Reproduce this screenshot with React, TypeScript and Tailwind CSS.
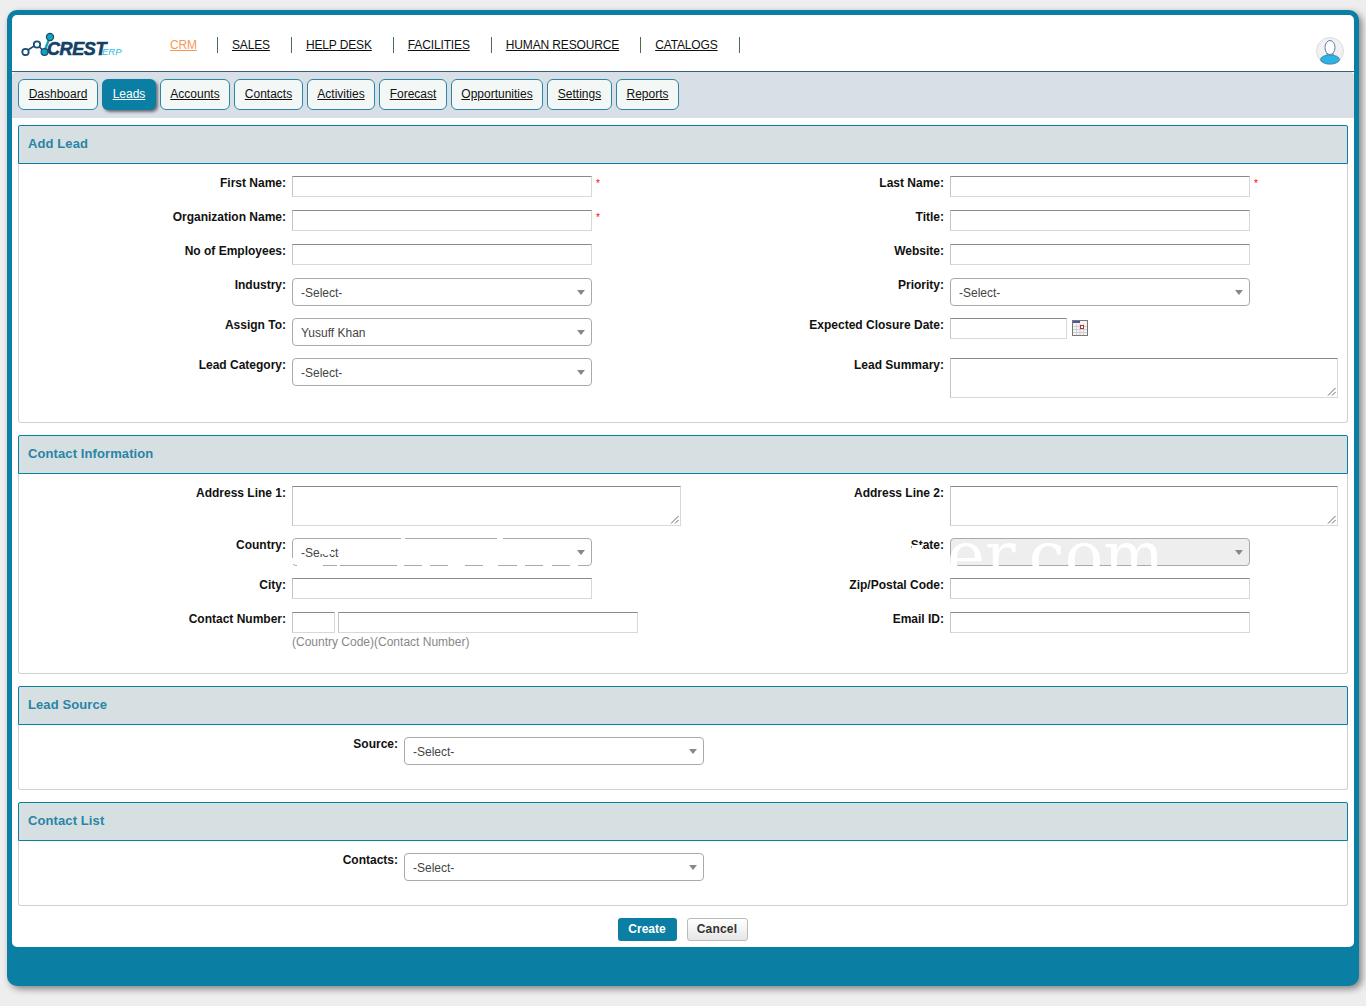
import type { ReactNode } from "react";

const F = { fontFamily: '"Liberation Sans", Arial, sans-serif' };

function Label({ text, w = "w-[273px]" }: { text: string; w?: string }) {
  return <label className={`${w} shrink-0 text-right text-[12px] leading-[14px] font-bold text-[#111] pr-[6px]`}>{text}</label>;
}
function Input({ w = "w-[300px]", req }: { w?: string; req?: boolean }) {
  return (
    <div className="flex items-start">
      <div className={`${w} h-[21px] bg-white border border-[#d8d8d8] border-t-[#8a8a8a] border-l-[#c4c4c4]`} />
      {req && <span className="text-[#f00] text-[10px] leading-[12px] ml-[4px] mt-[2px]">*</span>}
    </div>
  );
}
function Select({ value = "-Select-", disabled }: { value?: string; disabled?: boolean }) {
  return (
    <div className={`w-[300px] h-[28px] rounded-[4px] border border-[#aaa] flex items-center justify-between pl-[8px] pr-[6px] pt-[1px] ${disabled ? "bg-[#eee]" : "bg-white"}`}>
      <span className="text-[12px] text-[#444]">{value === "" ? "\u00a0" : value}</span>
      <span className="w-0 h-0 border-x-[4px] border-x-transparent border-t-[5px] border-t-[#888]" />
    </div>
  );
}
function Area({ w = "w-[388px]" }: { w?: string }) {
  return (
    <div className={`${w} shrink-0 h-[40px] bg-white border border-[#d8d8d8] border-t-[#8a8a8a] border-l-[#c4c4c4] relative`}>
      <svg className="absolute right-[1px] bottom-[1px]" width="9" height="9" viewBox="0 0 9 9">
        <path d="M8.5 1 L1 8.5 M8.5 5 L5 8.5" stroke="#666" strokeWidth="1" fill="none" />
      </svg>
    </div>
  );
}
function Row({ h, left, right }: { h: string; left: ReactNode; right?: ReactNode }) {
  return (
    <div className={`flex ${h}`}>
      <div className="w-[658px] flex items-start shrink-0">{left}</div>
      <div className="flex items-start">{right}</div>
    </div>
  );
}
function Section({ title, bodyH, children }: { title: string; bodyH: string; children: ReactNode }) {
  return (
    <section className="mb-[12px]">
      <div className="h-[39px] bg-[#d6e0e3] border border-[#0b7ea3] rounded-t-[2px] flex items-center pl-[9px] pb-[1px]">
        <h2 className="text-[13px] font-bold text-[#2a84a4] tracking-[0.1px]">{title}</h2>
      </div>
      <div className={`${bodyH} border border-t-0 border-[#d0d0d0] rounded-b-[3px] pt-[12px] bg-white`}>{children}</div>
    </section>
  );
}
const tabs = [
  { t: "Dashboard", w: "w-[80px]" },
  { t: "Leads", w: "w-[54px]" },
  { t: "Accounts", w: "w-[70px]" },
  { t: "Contacts", w: "w-[69px]" },
  { t: "Activities", w: "w-[68px]" },
  { t: "Forecast", w: "w-[68px]" },
  { t: "Opportunities", w: "w-[92px]" },
  { t: "Settings", w: "w-[65px]" },
  { t: "Reports", w: "w-[63px]" },
];
const nav = ["SALES", "HELP DESK", "FACILITIES", "HUMAN RESOURCE", "CATALOGS"];

function Logo() {
  return (
    <div className="relative w-[104px] h-[30px]">
      <svg className="absolute left-0 top-0" width="40" height="28" viewBox="0 0 40 28" fill="none">
        <path d="M4 20 L16 12 L23 20" stroke="#1b4f72" strokeWidth="1.6" />
        <path d="M23 20 L29 5" stroke="#12a3bd" strokeWidth="2.4" />
        <circle cx="4.5" cy="20" r="3.2" stroke="#1b4f72" strokeWidth="1.8" fill="white" />
        <circle cx="16" cy="12.5" r="3.2" stroke="#1b4f72" strokeWidth="1.8" fill="white" />
        <circle cx="23.5" cy="20" r="3.4" fill="#12a3bd" stroke="#1b4f72" strokeWidth="1.2" />
        <circle cx="29" cy="5" r="3.6" fill="#12a3bd" stroke="#1b4f72" strokeWidth="1.2" />
      </svg>
      <span className="absolute left-[26px] top-[7px] text-[18px] leading-[20px] font-bold italic text-[#143f66] tracking-[-0.4px] [-webkit-text-stroke:0.6px_#143f66]">CREST</span>
      <span className="absolute left-[81px] top-[14px] text-[9.5px] leading-[12px] italic text-[#25bcd8]">ERP</span>
    </div>
  );
}
function Avatar() {
  return (
    <svg width="30" height="30" viewBox="0 0 30 30" fill="none">
      <circle cx="15" cy="15" r="13.5" fill="#f1f1f1" stroke="#dcdcdc" strokeWidth="1" />
      <ellipse cx="15" cy="11.5" rx="5" ry="7" fill="white" stroke="#5b7fb0" strokeWidth="1" />
      <path d="M12 17 L12 20 M18 17 L18 20" stroke="#5b7fb0" />
      <ellipse cx="15" cy="23.5" rx="9.5" ry="4.6" fill="#2bb3e3" stroke="#3b6f9c" strokeWidth="0.7" />
    </svg>
  );
}
function Calendar() {
  return (
    <svg width="16" height="16" viewBox="0 0 16 16" className="ml-[5px] mt-[2px]">
      <rect x="0.5" y="0.5" width="15" height="15" fill="#f4f4f4" stroke="#777" />
      <rect x="1" y="1" width="7" height="2" fill="#4a55a8" />
      <path d="M1 6.5H15M1 9.5H15M1 12.5H15M4.5 4V15M8 4V15M11.5 4V15" stroke="#cfcfcf" strokeWidth="1" />
      <rect x="8.5" y="5.5" width="3" height="3" fill="#fff" stroke="#a33" />
    </svg>
  );
}
function WatermarkGaps() {
  const rects = [
    [121, 7, 4, 3], [217, 7, 6, 3],
    [17, 34, 26, 3], [57, 34, 3, 3], [117, 34, 7, 3], [142, 34, 8, 3], [168, 34, 17, 3],
    [203, 34, 15, 3], [237, 34, 8, 3], [263, 34, 9, 3], [290, 34, 8, 3],
    [11, 28, 3, 6], [40, 15, 11, 9], [59, 13, 7, 12],
    [632, 15, 10, 9],
  ];
  return (
    <svg className="absolute left-[280px] top-[530px]" width="680" height="40" viewBox="0 0 680 40">
      {rects.map(([x, y, w, h], i) => <rect key={i} x={x} y={y} width={w} height={h} fill="#fff" />)}
    </svg>
  );
}

export default function App() {
  return (
    <div className="w-[1366px] h-[1006px] bg-[#eeeeee] relative overflow-hidden pt-[10px] pl-[7px]" style={F}>
      <div className="w-[1352px] h-[976px] bg-[#0b7ea3] rounded-[10px] p-[5px] shadow-[3px_3px_7px_rgba(0,0,0,0.45)]">
        <div className="w-[1342px] h-[932px] bg-white rounded-[5px] overflow-hidden flex flex-col">
          <header className="h-[57px] shrink-0 border-b border-[#3d5f75] flex items-start">
            <div className="ml-[9px] mt-[17px] w-[149px] shrink-0"><Logo /></div>
            <nav className="flex items-center mt-[22px] text-[12px] leading-[16px] tracking-[-0.14px]">
              <a className="underline text-[#f59a55] pr-[20px]">CRM</a>
              {nav.map((n, i) => (
                <a key={n} className={`underline text-[#111] border-l border-[#4c6b4c] pl-[14px] pr-[21px] ${i === 4 ? "border-r" : ""}`}>{n}</a>
              ))}
            </nav>
            <div className="ml-auto mt-[21px] mr-[9px]"><Avatar /></div>
          </header>
          <div className="h-[46px] shrink-0 bg-[#d8dfe6] rounded-t-[4px] flex items-start pt-[7px] pl-[6px] gap-[4px]">
            {tabs.map(({ t, w }) => t === "Leads" ? (
              <a key={t} className={`${w} h-[31px] text-center rounded-[6px] bg-[#0b7ea3] text-white underline text-[12px] leading-[31px] shadow-[2px_2px_3px_rgba(0,0,0,0.5)]`}>{t}</a>
            ) : (
              <a key={t} className={`${w} h-[31px] text-center rounded-[6px] bg-[#f3f8f6] border border-[#2b86a5] text-[#111] underline text-[12px] leading-[29px]`}>{t}</a>
            ))}
          </div>
          <main className="px-[6px] pt-[7px]">
            <Section title="Add Lead" bodyH="h-[259px]">
              <Row h="h-[34px]" left={<><Label text="First Name:" /><Input req /></>} right={<><Label text="Last Name:" /><Input req /></>} />
              <Row h="h-[34px]" left={<><Label text="Organization Name:" /><Input req /></>} right={<><Label text="Title:" /><Input /></>} />
              <Row h="h-[34px]" left={<><Label text="No of Employees:" /><Input /></>} right={<><Label text="Website:" /><Input /></>} />
              <Row h="h-[40px]" left={<><Label text="Industry:" /><Select /></>} right={<><Label text="Priority:" /><Select /></>} />
              <Row h="h-[40px]" left={<><Label text="Assign To:" /><Select value="Yusuff Khan" /></>} right={<><Label text="Expected Closure Date:" /><Input w="w-[117px]" /><Calendar /></>} />
              <Row h="h-[40px]" left={<><Label text="Lead Category:" /><Select /></>} right={<><Label text="Lead Summary:" /><Area /></>} />
            </Section>
            <Section title="Contact Information" bodyH="h-[200px]">
              <Row h="h-[52px]" left={<><Label text="Address Line 1:" /><Area w="w-[389px]" /></>} right={<><Label text="Address Line 2:" /><Area /></>} />
              <Row h="h-[40px]" left={<><Label text="Country:" /><Select /></>} right={<><Label text="State:" /><Select value="" disabled /></>} />
              <Row h="h-[34px]" left={<><Label text="City:" /><Input /></>} right={<><Label text="Zip/Postal Code:" /><Input /></>} />
              <Row h="h-[34px]" left={
                <>
                  <Label text="Contact Number:" />
                  <div>
                    <div className="flex gap-[3px]"><Input w="w-[43px]" /><Input /></div>
                    <p className="text-[12px] leading-[14px] text-[#888] mt-[2px]">(Country Code)(Contact Number)</p>
                  </div>
                </>
              } right={<><Label text="Email ID:" /><Input /></>} />
            </Section>
            <Section title="Lead Source" bodyH="h-[65px]">
              <div className="flex items-start"><Label text="Source:" w="w-[385px]" /><Select /></div>
            </Section>
            <Section title="Contact List" bodyH="h-[65px]">
              <div className="flex items-start"><Label text="Contacts:" w="w-[385px]" /><Select /></div>
            </Section>
            <div className="flex justify-center gap-[10px] pr-[1px]">
              <button className="w-[59px] h-[23px] rounded-[3px] bg-[#0b7ea3] text-white text-[12px] font-bold pb-[2px]">Create</button>
              <button className="w-[61px] h-[23px] rounded-[3px] border border-[#bbb] bg-gradient-to-b from-white to-[#e6e6e6] text-[#333] text-[12px] font-bold tracking-[0.2px] pb-[2px]">Cancel</button>
            </div>
          </main>
        </div>
      </div>
      <WatermarkGaps />
      <span className="absolute left-[947px] top-[523px] text-white text-[64px] leading-[64px] whitespace-nowrap" style={{ fontFamily: '"DejaVu Serif", serif' }}>er.com</span>
    </div>
  );
}
